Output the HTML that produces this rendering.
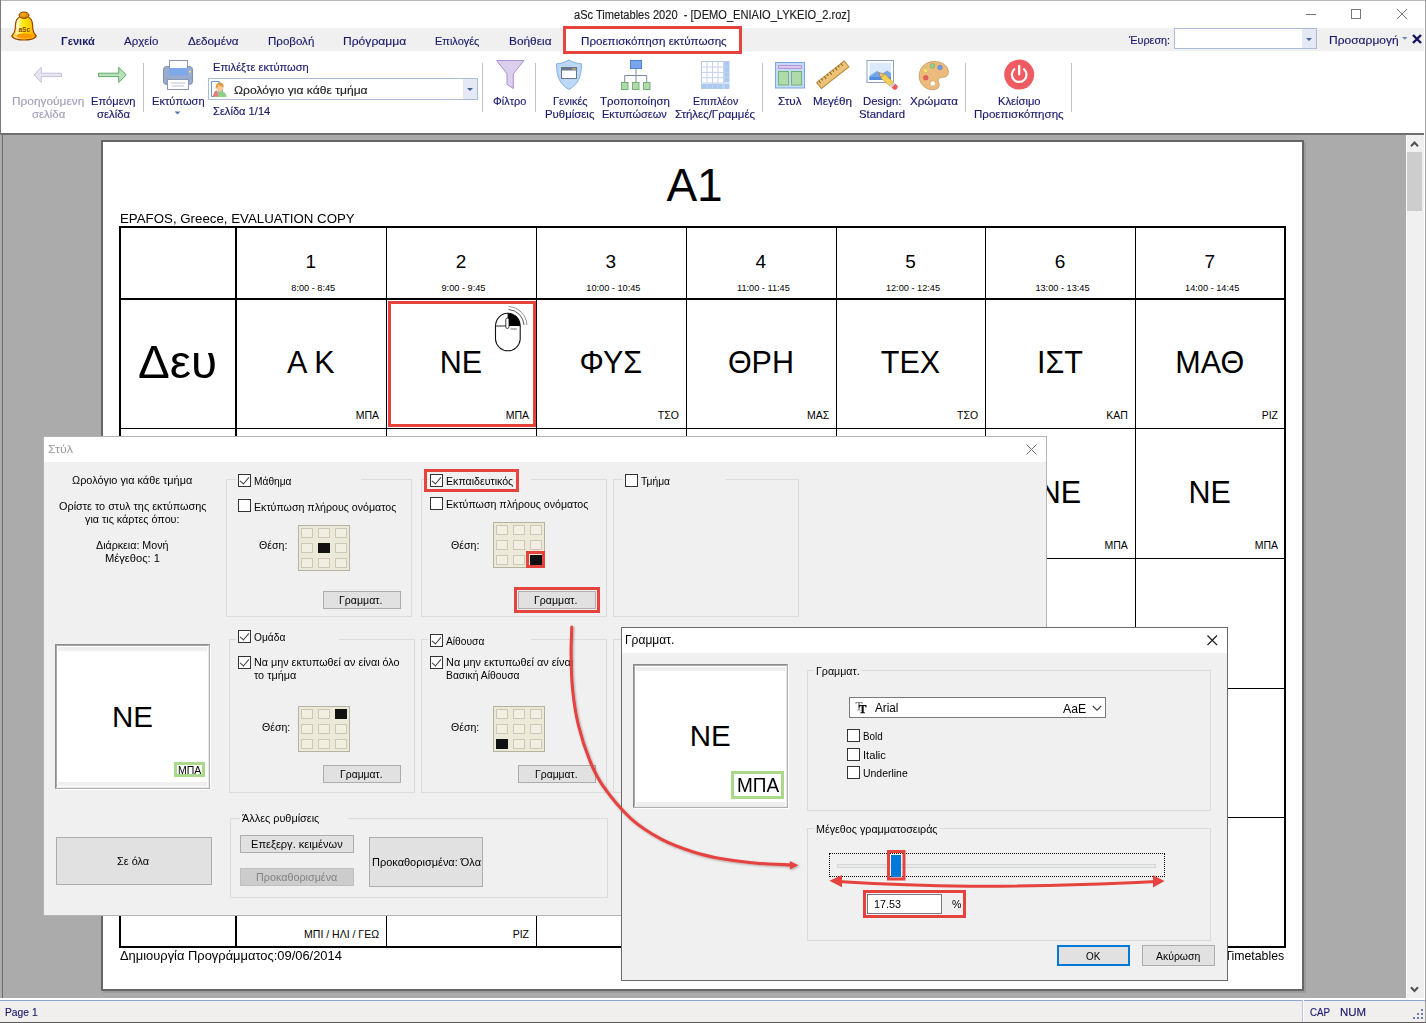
<!DOCTYPE html>
<html lang="el">
<head>
<meta charset="utf-8">
<title>aSc Timetables 2020</title>
<style>
*{box-sizing:border-box;margin:0;padding:0}
html,body{width:1426px;height:1023px;overflow:hidden;background:#ababab;font-family:"Liberation Sans",sans-serif;}
.abs{position:absolute}
.t{position:absolute;white-space:pre;transform-origin:0 0}
#app{position:absolute;left:0;top:0;width:1426px;height:1023px;overflow:hidden;background:#ababab}
/* ---------- title + ribbon ---------- */
#titlebar{position:absolute;left:0;top:0;width:1426px;height:28px;background:#fff}
#title{position:absolute;left:0;width:1426px;top:7px;text-align:center;font-size:12px;color:#1e1e1e;letter-spacing:-0.1px}
#tabrow{position:absolute;left:0;top:28px;width:1426px;height:23px;background:#f0f0f0}
.tab{position:absolute;top:6px;font-size:12px;color:#1a1a6c;white-space:nowrap;transform-origin:0 0}
#ribbon{position:absolute;left:0;top:51px;width:1426px;height:82px;background:#fff}
#ribline{position:absolute;left:0;top:133px;width:1426px;height:2px;background:#6e6e6e}
.rlab{position:absolute;font-size:12px;line-height:13px;color:#1a1a6c;text-align:center;white-space:nowrap;transform:translateX(-50%)}
.rlab.dis{color:#9c9cb0}
.rsep{position:absolute;top:63px;width:1px;height:49px;background:#c4c4c4}
/* ---------- page ---------- */
#page{position:absolute;left:101px;top:140px;width:1203px;height:851px;background:#fff;border:2px solid #666;box-shadow:2px 2px 0 #9c9c9c}
.tt{position:absolute;color:#000;white-space:nowrap}
.hl{position:absolute;background:#000;height:1px}
.vl{position:absolute;background:#000;width:1px}
.num{position:absolute;font-size:20px;color:#000;transform:translateX(-50%);white-space:nowrap}
.tm{position:absolute;font-size:9px;color:#000;transform:translateX(-50%);white-space:nowrap}
.sub{position:absolute;font-size:29px;color:#000;transform:translateX(-50%);white-space:nowrap}
.tch{position:absolute;font-size:10.5px;color:#000;white-space:nowrap;text-align:right}
/* ---------- status ---------- */
#status{position:absolute;left:0;top:999px;width:1426px;height:23px;background:#f1eeee;border-top:1px solid #fff}
#status span{position:absolute;top:5px;font-size:12px;color:#1a1a6c}
/* ---------- dialogs ---------- */
.dlg{position:absolute;background:#f0f0f0;border:1px solid #9a9a9a}
.dlg .cap{position:absolute;left:0;top:0;right:0;height:25px;background:#fff}
.dt{position:absolute;font-size:11px;color:#000;white-space:nowrap}
.grp{position:absolute;border:1px solid #dcdcdc}
.cb{position:absolute;width:13px;height:13px;background:#fff;border:1px solid #333}
.cb.on::after{content:"";position:absolute;left:3px;top:0px;width:4px;height:8px;border:solid #3c3c3c;border-width:0 1.2px 1.2px 0;transform:rotate(40deg)}
.btn{position:absolute;background:#e1e1e1;border:1px solid #adadad;font-size:11px;color:#000;text-align:center;white-space:nowrap}
.pos{position:absolute;width:52px;height:46px;background:#ece9d8;border:1px solid #b5b2a0}
.pos i{position:absolute;width:12px;height:10px;border:1px solid #cbc8b8;background:#f2efe2}
.pos i.s{background:#111;border-color:#111}
</style>
</head>
<body>
<div id="app">
<div id="titlebar">
  <div class="abs" style="left:0;top:0;width:1426px;height:1px;background:#b9b9b9"></div>
  
  <svg class="abs" style="left:1296px;top:0" width="130" height="28" viewBox="0 0 130 28">
    <path d="M10 14.5H20" stroke="#777" stroke-width="1" fill="none"/>
    <rect x="55.5" y="9.5" width="9" height="9" stroke="#777" stroke-width="1" fill="none"/>
    <path d="M101 9L111 19M111 9L101 19" stroke="#777" stroke-width="1" fill="none"/>
  </svg>
</div>
<div id="tabrow">








  <div class="abs" style="left:1174px;top:0;width:143px;height:21px;background:#fff;border:1px solid #abbcd6">
    <div class="abs" style="right:0;top:0;width:14px;height:19px;background:#e4e9f5"></div>
    <svg class="abs" style="right:4px;top:9px" width="6" height="4"><path d="M0 0H6L3 3Z" fill="#41649b"/></svg>
  </div>
  <svg class="abs" style="left:1401.500px;top:9px" width="6" height="4"><path d="M0 0H5.500L2.750 2.750Z" fill="#6a85b8"/></svg>
  <svg class="abs" style="left:1411.500px;top:6px" width="10" height="10"><path d="M1 1L9 9M9 1L1 9" stroke="#15155c" stroke-width="2.4"/></svg>
</div>
<!-- bell -->
<svg class="abs" style="left:8px;top:8px" width="34" height="36" viewBox="8 8 34 36">
  <defs>
    <linearGradient id="bb" x1="0" y1="0" x2="1" y2="0"><stop offset="0" stop-color="#f2a600"/><stop offset=".22" stop-color="#fff3a0"/><stop offset=".5" stop-color="#ffe800"/><stop offset=".8" stop-color="#ffc400"/><stop offset="1" stop-color="#e88a00"/></linearGradient>
    <linearGradient id="br" x1="0" y1="0" x2="0" y2="1"><stop offset="0" stop-color="#ffd000"/><stop offset="1" stop-color="#ff9500"/></linearGradient>
    <radialGradient id="bk" cx="40%" cy="35%" r="70%"><stop offset="0" stop-color="#f7b21a"/><stop offset="1" stop-color="#c97400"/></radialGradient>
  </defs>
  <path d="M11.900 35.600C13.600 33.600 15.100 32 15.200 29C15.200 22 16 16.500 24 16C32 16.500 32.800 22 32.800 29C32.900 32 34.400 33.600 36.100 35.600C36.600 38.300 30 40 24 40C18 40 11.400 38.300 11.900 35.600Z" fill="url(#bb)" stroke="#9a4300" stroke-width="1.200" stroke-linejoin="round"/>
  <ellipse cx="24.500" cy="36" rx="8" ry="2.700" fill="#ff9800"/>
  <path d="M17 30C17 24 17.500 20 20.500 18.500C18.800 21 18.600 25 18.700 30.500Z" fill="#fff" opacity=".7"/>
  <ellipse cx="24" cy="15.200" rx="5" ry="3.200" fill="url(#bk)" stroke="#8a4300" stroke-width="1"/>
  <text x="24.300" y="32.200" font-size="6.500" font-weight="bold" text-anchor="middle" fill="#8a4708" font-family="Liberation Sans, sans-serif">aSc</text>
</svg>
<div id="ribbon"></div>
<div id="ribline"></div>
<div class="abs" style="left:0;top:0;width:1px;height:135px;background:#7a7a7a"></div>
<div class="abs" style="left:2px;top:135px;width:1px;height:863px;background:#6e6e6e"></div>
<!-- ribbon separators -->
<div class="rsep" style="left:143px"></div>
<div class="rsep" style="left:482px"></div>
<div class="rsep" style="left:535px"></div>
<div class="rsep" style="left:762px"></div>
<div class="rsep" style="left:965px"></div>
<div class="rsep" style="left:1071px"></div>
<!-- combo -->
<div class="abs" style="left:208px;top:78px;width:270px;height:22px;border:1px solid #abbcd6;background:#fff">
  <div class="abs" style="right:0;top:0;width:14px;height:20px;background:#e4e9f5"></div>
  <svg class="abs" style="right:4px;top:9px" width="6" height="4"><path d="M0 0H6L3 3Z" fill="#41649b"/></svg>
</div>
<!-- ribbon icons: one svg overlay covering ribbon y=51..133 -->
<svg class="abs" style="left:0;top:51px" width="1100" height="82" viewBox="0 51 1100 82">
  <!-- prev arrow -->
  <path d="M34 74.800L41.300 67.300V73.200H61.500V76.600H41.300V82.500Z" fill="#e6e4f0" stroke="#c6c2da" stroke-width="1" stroke-linejoin="miter"/>
  <!-- next arrow -->
  <path d="M126.300 74.800L118.700 67.300V73.200H98.500V76.600H118.700V82.500Z" fill="#b9e0b7" stroke="#5fa96a" stroke-width="1"/>
  <!-- printer -->
  <rect x="163.5" y="66.5" width="29" height="18" rx="3" fill="#9aaccc" stroke="#7f90b3"/>
  <rect x="169.5" y="60.5" width="18" height="8" fill="#fff" stroke="#8a98b8"/>
  <rect x="169" y="68" width="19" height="7.5" fill="#7ea8ea"/>
  <circle cx="189.8" cy="71.7" r="1" fill="#ffe27a"/>
  <rect x="167.5" y="79.5" width="21" height="10" fill="#fff" stroke="#8a98b8"/>
  <path d="M171 83H185M172 86H184" stroke="#b6bfd2" stroke-width="1"/>
  <!-- Εκτύπωση dropdown -->
  <path d="M174.5 111.5H180.5L177.5 114.5Z" fill="#5a78b0"/>
  <!-- combo icon (doc + person) -->
  <path d="M211.5 81.5H219L222.5 85V96.5H211.5Z" fill="#fff" stroke="#6b96d8" stroke-width="1"/>
  <path d="M219 81.5V85H222.5" fill="none" stroke="#6b96d8"/>
  <path d="M214 97C214 92.5 217 91 219.5 91C223 91 226.5 92.5 226.5 97Z" fill="#8ed08a"/>
  <path d="M213 96.5C213.5 92 215.5 90.5 217 90.5L218 96.5Z" fill="#f0767c"/>
  <ellipse cx="220" cy="87.5" rx="3.4" ry="4" fill="#f7c99a"/>
  <path d="M215.8 89C215.2 84.5 217.5 82.6 220.3 82.8C222.6 83 224 84.7 223.6 87.2C222.3 86.8 220 86 218.3 84.8C217.8 86.5 217 88.4 215.8 89Z" fill="#e39a3c"/>
  <!-- filter -->
  <path d="M496.6 60.5H524L513.3 73.8V88.5L507 84.3V73.8Z" fill="#dccfee" stroke="#a98fd0" stroke-width="1" stroke-linejoin="round"/>
  <!-- shield -->
  <path d="M569 60C564.5 62.6 560.3 63.6 556.6 63.8C556.4 76 559.5 84.2 569 89.4C578.5 84.2 581.6 76 581.4 63.8C577.7 63.6 573.5 62.6 569 60Z" fill="#bcd8f7" stroke="#7fb0e6" stroke-width="1"/>
  <rect x="561.5" y="67.5" width="15" height="11" fill="#fff" stroke="#6d7689"/>
  <rect x="561.5" y="67.5" width="15" height="3" fill="#6d7689"/>
  <rect x="572.5" y="68.3" width="1.3" height="1.3" fill="#f5c65a"/><rect x="574.4" y="68.3" width="1.3" height="1.3" fill="#f5c65a"/>
  <!-- org chart -->
  <rect x="630.5" y="60.5" width="11" height="8" fill="#78a5ee" stroke="#4f82d8"/>
  <path d="M636 69V82M624.7 82V75.5H646.7V82" fill="none" stroke="#7d8aa3" stroke-width="1"/>
  <rect x="621.5" y="82.500" width="6.5" height="7" fill="#aedba9" stroke="#73b174"/>
  <rect x="632.5" y="82.500" width="6.5" height="7" fill="#aedba9" stroke="#73b174"/>
  <rect x="643.5" y="82.500" width="6.5" height="7" fill="#aedba9" stroke="#73b174"/>
  <!-- grid -->
  <rect x="701.5" y="61.5" width="27.500" height="27" fill="#fff" stroke="#b8c6e2"/>
  <rect x="723.5" y="61.5" width="5.5" height="27" fill="#a9c9f2"/>
  <rect x="701.5" y="83" width="27.500" height="5.5" fill="#a9c9f2"/>
  <path d="M723.500 61.500V88.500M701.500 83H729" stroke="#fff" stroke-width="1.400" fill="none"/>
  <path d="M707 61.5V88.500M712.500 61.5V88.500M718 61.5V88.500M723.500 61.5V88.500M701.500 67H729M701.500 72.400H729M701.500 77.700H729M701.500 83H729" stroke="#c5d2ea" stroke-width="1" fill="none"/>
  <!-- style icon -->
  <rect x="775.5" y="62.5" width="29" height="25.500" fill="#c4dbf7" stroke="#7ea6e2"/>
  <rect x="778.5" y="65.500" width="23" height="3" fill="#dcc6ee" stroke="#b497d4"/>
  <rect x="778.5" y="71.500" width="10" height="13.500" fill="#aedba9" stroke="#73b174"/>
  <rect x="791.5" y="71.500" width="10" height="13.500" fill="#aedba9" stroke="#73b174"/>
  <!-- ruler -->
  <g transform="rotate(-38 832.800 74.700)">
    <rect x="815.300" y="70.900" width="35" height="7.600" fill="#edc477" stroke="#b98a3c"/>
    <path d="M818 70.800V74M821.500 70.800V73M825 70.800V74M828.500 70.800V73M832 70.800V74M835.500 70.800V73M839 70.800V74M842.500 70.800V73M846 70.800V74" stroke="#8a6225" stroke-width="1"/>
  </g>
  <!-- design icon -->
  <rect x="867" y="60.500" width="26.500" height="22" fill="#fff" stroke="#8fa0bd"/>
  <rect x="869.500" y="63" width="21.500" height="17" fill="#dce9fb"/>
  <path d="M869.500 76L877 71L882 74L887 70.500L891 73V80H869.500Z" fill="#74a7ea"/>
  <rect x="869.500" y="77" width="21.500" height="3" fill="#4f8be0"/>
  <g transform="rotate(42 886 79)">
    <path d="M876.500 79L881.500 76.300V81.700Z" fill="#e9c48f" stroke="#a8793a" stroke-width=".6"/>
    <rect x="881.500" y="76.300" width="12" height="5.400" fill="#f7ce55" stroke="#c19a2c" stroke-width=".6"/>
    <rect x="893.500" y="76.300" width="2.500" height="5.400" fill="#c9cdd6"/>
    <path d="M896 76.300H898A2.700 2.700 0 0 1 898 81.700H896Z" fill="#ef5a60"/>
  </g>
  <!-- palette -->
  <path d="M934.500 61.500C925 61.300 918.500 68.500 919.200 77C919.800 85 926.500 90.300 934 89.700C938.500 89.300 940.200 86 938.700 82.800C937.300 79.800 939 77.300 942.300 77.300C946.500 77.300 948.800 75 948.300 71C947.500 65 941 61.600 934.500 61.500Z" fill="#ebbb7d" stroke="#c79650" stroke-width=".8"/>
  <circle cx="925.500" cy="70.500" r="2.300" fill="#f7e27a" stroke="#c9b24a" stroke-width=".5"/>
  <circle cx="932.500" cy="65.800" r="2.300" fill="#8fd08c" stroke="#5ca55e" stroke-width=".5"/>
  <circle cx="940" cy="67.500" r="2.300" fill="#6f9be8" stroke="#4a78c8" stroke-width=".5"/>
  <circle cx="925.800" cy="77.800" r="2.300" fill="#ef5a60" stroke="#c43c44" stroke-width=".5"/>
  <circle cx="932.800" cy="83.500" r="2.600" fill="#fff" stroke="#c79650" stroke-width=".5"/>
  <!-- power -->
  <circle cx="1019.200" cy="74.600" r="15" fill="#ef5b62"/>
  <path d="M1014.300 69.200A7.300 7.300 0 1 0 1024.100 69.200" fill="none" stroke="#fff" stroke-width="2.200" stroke-linecap="round"/>
  <path d="M1019.200 65.800V74.500" stroke="#fff" stroke-width="2.200" stroke-linecap="round"/>
</svg>
<!-- active tab -->
<div class="abs" style="left:563px;top:26px;width:179px;height:28px;background:#fff;border:3px solid #e6433f"></div>

<span class="t" style="left:574.0px;top:9.3px;font-size:12px;line-height:12px;color:#1c1c1c;transform:scaleX(0.9244);-webkit-text-stroke:0.15px #1c1c1c">aSc Timetables 2020  - [DEMO_ENIAIO_LYKEIO_2.roz]</span>
<span class="t" style="left:60.6px;top:36.3px;font-size:11px;line-height:11px;color:#1a1a6c;transform:scaleX(1.0075);font-weight:bold">Γενικά</span>
<span class="t" style="left:123.7px;top:36.3px;font-size:11px;line-height:11px;color:#1a1a6c;transform:scaleX(1.0443);-webkit-text-stroke:0.15px #1a1a6c">Αρχείο</span>
<span class="t" style="left:187.9px;top:36.3px;font-size:11px;line-height:11px;color:#1a1a6c;transform:scaleX(1.0611);-webkit-text-stroke:0.15px #1a1a6c">Δεδομένα</span>
<span class="t" style="left:267.7px;top:36.3px;font-size:11px;line-height:11px;color:#1a1a6c;transform:scaleX(1.0482);-webkit-text-stroke:0.15px #1a1a6c">Προβολή</span>
<span class="t" style="left:343.4px;top:36.3px;font-size:11px;line-height:11px;color:#1a1a6c;transform:scaleX(1.0994);-webkit-text-stroke:0.15px #1a1a6c">Πρόγραμμα</span>
<span class="t" style="left:435.4px;top:36.3px;font-size:11px;line-height:11px;color:#1a1a6c;transform:scaleX(0.9971);-webkit-text-stroke:0.15px #1a1a6c">Επιλογές</span>
<span class="t" style="left:509.0px;top:36.3px;font-size:11px;line-height:11px;color:#1a1a6c;transform:scaleX(1.0785);-webkit-text-stroke:0.15px #1a1a6c">Βοήθεια</span>
<span class="t" style="left:580.6px;top:36.3px;font-size:11px;line-height:11px;color:#1a1a6c;transform:scaleX(1.0554);-webkit-text-stroke:0.15px #1a1a6c">Προεπισκόπηση εκτύπωσης</span>
<span class="t" style="left:1129.3px;top:34.8px;font-size:11px;line-height:11px;color:#1a1a6c;transform:scaleX(0.9841);-webkit-text-stroke:0.15px #1a1a6c">Έυρεση:</span>
<span class="t" style="left:1329.3px;top:34.8px;font-size:11px;line-height:11px;color:#1a1a6c;transform:scaleX(1.0923);-webkit-text-stroke:0.15px #1a1a6c">Προσαρμογή</span>
<span class="t" style="left:11.9px;top:96.4px;font-size:11px;line-height:11px;color:#a3a0b8;transform:scaleX(1.0801);-webkit-text-stroke:0.15px #a3a0b8">Προηγούμενη</span>
<span class="t" style="left:31.6px;top:108.9px;font-size:11px;line-height:11px;color:#a3a0b8;transform:scaleX(1.0366);-webkit-text-stroke:0.15px #a3a0b8">σελίδα</span>
<span class="t" style="left:90.6px;top:96.4px;font-size:11px;line-height:11px;color:#1a1a6c;transform:scaleX(1.0112);-webkit-text-stroke:0.15px #1a1a6c">Επόμενη</span>
<span class="t" style="left:97.0px;top:108.9px;font-size:11px;line-height:11px;color:#1a1a6c;transform:scaleX(1.0272);-webkit-text-stroke:0.15px #1a1a6c">σελίδα</span>
<span class="t" style="left:151.6px;top:96.4px;font-size:11px;line-height:11px;color:#1a1a6c;transform:scaleX(1.0088);-webkit-text-stroke:0.15px #1a1a6c">Εκτύπωση</span>
<span class="t" style="left:212.6px;top:62.0px;font-size:11px;line-height:11px;color:#1a1a6c;transform:scaleX(1.0116);-webkit-text-stroke:0.15px #1a1a6c">Επιλέξτε εκτύπωση</span>
<span class="t" style="left:233.7px;top:84.7px;font-size:11px;line-height:11px;color:#1e1e1e;transform:scaleX(1.0985);-webkit-text-stroke:0.15px #1e1e1e">Ωρολόγιο για κάθε τμήμα</span>
<span class="t" style="left:212.6px;top:106.2px;font-size:11px;line-height:11px;color:#1a1a6c;transform:scaleX(1.0122);-webkit-text-stroke:0.15px #1a1a6c">Σελίδα 1/14</span>
<span class="t" style="left:493.0px;top:96.4px;font-size:11px;line-height:11px;color:#1a1a6c;transform:scaleX(0.9954);-webkit-text-stroke:0.15px #1a1a6c">Φίλτρο</span>
<span class="t" style="left:552.6px;top:96.4px;font-size:11px;line-height:11px;color:#1a1a6c;transform:scaleX(1.0022);-webkit-text-stroke:0.15px #1a1a6c">Γενικές</span>
<span class="t" style="left:544.8px;top:108.9px;font-size:11px;line-height:11px;color:#1a1a6c;transform:scaleX(1.0356);-webkit-text-stroke:0.15px #1a1a6c">Ρυθμίσεις</span>
<span class="t" style="left:599.5px;top:96.4px;font-size:11px;line-height:11px;color:#1a1a6c;transform:scaleX(1.0377);-webkit-text-stroke:0.15px #1a1a6c">Τροποποίηση</span>
<span class="t" style="left:602.0px;top:108.9px;font-size:11px;line-height:11px;color:#1a1a6c;transform:scaleX(0.9967);-webkit-text-stroke:0.15px #1a1a6c">Εκτυπώσεων</span>
<span class="t" style="left:692.5px;top:96.4px;font-size:11px;line-height:11px;color:#1a1a6c;transform:scaleX(0.9620);-webkit-text-stroke:0.15px #1a1a6c">Επιπλέον</span>
<span class="t" style="left:674.6px;top:108.9px;font-size:11px;line-height:11px;color:#1a1a6c;transform:scaleX(1.0381);-webkit-text-stroke:0.15px #1a1a6c">Στήλες/Γραμμές</span>
<span class="t" style="left:778.0px;top:96.4px;font-size:11px;line-height:11px;color:#1a1a6c;transform:scaleX(1.0614);-webkit-text-stroke:0.15px #1a1a6c">Στυλ</span>
<span class="t" style="left:813.4px;top:96.4px;font-size:11px;line-height:11px;color:#1a1a6c;transform:scaleX(1.0649);-webkit-text-stroke:0.15px #1a1a6c">Μεγέθη</span>
<span class="t" style="left:862.6px;top:96.4px;font-size:11px;line-height:11px;color:#1a1a6c;transform:scaleX(1.0296);-webkit-text-stroke:0.15px #1a1a6c">Design:</span>
<span class="t" style="left:858.7px;top:108.9px;font-size:11px;line-height:11px;color:#1a1a6c;transform:scaleX(1.0301);-webkit-text-stroke:0.15px #1a1a6c">Standard</span>
<span class="t" style="left:910.0px;top:96.4px;font-size:11px;line-height:11px;color:#1a1a6c;transform:scaleX(1.0564);-webkit-text-stroke:0.15px #1a1a6c">Χρώματα</span>
<span class="t" style="left:997.9px;top:96.4px;font-size:11px;line-height:11px;color:#1a1a6c;transform:scaleX(1.0173);-webkit-text-stroke:0.15px #1a1a6c">Κλείσιμο</span>
<span class="t" style="left:974.3px;top:108.9px;font-size:11px;line-height:11px;color:#1a1a6c;transform:scaleX(1.0516);-webkit-text-stroke:0.15px #1a1a6c">Προεπισκόπησης</span>
<div id="page"></div>
<!-- table lines -->
<div class="abs" style="left:119px;top:226px;width:1167px;height:2px;background:#000"></div>
<div class="abs" style="left:119px;top:298px;width:1167px;height:2px;background:#000"></div>
<div class="abs" style="left:119px;top:946px;width:1167px;height:2px;background:#000"></div>
<div class="abs" style="left:119px;top:226px;width:2px;height:722px;background:#000"></div>
<div class="abs" style="left:235px;top:226px;width:2px;height:722px;background:#000"></div>
<div class="abs" style="left:1284px;top:226px;width:2px;height:722px;background:#000"></div>
<div class="vl" style="left:386px;top:226px;height:722px"></div>
<div class="vl" style="left:536px;top:226px;height:722px"></div>
<div class="vl" style="left:686px;top:226px;height:722px"></div>
<div class="vl" style="left:836px;top:226px;height:722px"></div>
<div class="vl" style="left:985px;top:226px;height:722px"></div>
<div class="vl" style="left:1135px;top:226px;height:722px"></div>
<div class="hl" style="left:119px;top:428px;width:1167px"></div>
<div class="hl" style="left:119px;top:558px;width:1167px"></div>
<div class="hl" style="left:119px;top:688px;width:1167px"></div>
<div class="hl" style="left:119px;top:817px;width:1167px"></div>
<!-- red highlight cell -->
<div class="abs" style="left:388px;top:301px;width:148px;height:126px;border:3px solid #e6433f"></div>
<!-- mouse icon -->
<svg class="abs" style="left:490px;top:303px" width="40" height="52" viewBox="490 303 40 52">
  <path d="M507.600 313.200A12.400 13 0 0 0 495.500 326V339.500A12.400 12.400 0 0 0 520.200 339.500V326A12.400 13 0 0 0 507.600 313.200Z" fill="#fff" stroke="#111" stroke-width="1.100"/>
  <path d="M507.600 313.200A12.400 13 0 0 1 520.200 326H507.600Z" fill="#000"/>
  <path d="M495.500 326H507" stroke="#111" stroke-width=".9"/>
  <rect x="505.800" y="318" width="3.200" height="10.500" rx="1.600" fill="#fff" stroke="#111" stroke-width=".8"/>
  <path d="M510.500 329H517" stroke="#777" stroke-width="1"/>
  <path d="M508.500 309.500A16.500 16.500 0 0 1 524 325" fill="none" stroke="#444" stroke-width=".9"/>
  <path d="M508.500 306.500A19.500 19.500 0 0 1 527 325" fill="none" stroke="#777" stroke-width=".8"/>
</svg>

<span class="t" style="left:666.4px;top:162.2px;font-size:46px;line-height:46px;color:#000">A1</span>
<span class="t" style="left:119.8px;top:211.9px;font-size:13.5px;line-height:13.5px;color:#000;transform:scaleX(0.9837)">EPAFOS, Greece, EVALUATION COPY</span>
<span class="t" style="left:305.5px;top:252.1px;font-size:19px;line-height:19px;color:#000">1</span>
<span class="t" style="left:291.3px;top:284.2px;font-size:9.2px;line-height:9.2px;color:#000">8:00 - 8:45</span>
<span class="t" style="left:455.7px;top:252.1px;font-size:19px;line-height:19px;color:#000">2</span>
<span class="t" style="left:441.5px;top:284.2px;font-size:9.2px;line-height:9.2px;color:#000">9:00 - 9:45</span>
<span class="t" style="left:605.6px;top:252.1px;font-size:19px;line-height:19px;color:#000">3</span>
<span class="t" style="left:586.3px;top:284.2px;font-size:9.2px;line-height:9.2px;color:#000">10:00 - 10:45</span>
<span class="t" style="left:755.6px;top:252.1px;font-size:19px;line-height:19px;color:#000">4</span>
<span class="t" style="left:737.0px;top:284.2px;font-size:9.2px;line-height:9.2px;color:#000">11:00 - 11:45</span>
<span class="t" style="left:905.2px;top:252.1px;font-size:19px;line-height:19px;color:#000">5</span>
<span class="t" style="left:885.9px;top:284.2px;font-size:9.2px;line-height:9.2px;color:#000">12:00 - 12:45</span>
<span class="t" style="left:1054.7px;top:252.1px;font-size:19px;line-height:19px;color:#000">6</span>
<span class="t" style="left:1035.4px;top:284.2px;font-size:9.2px;line-height:9.2px;color:#000">13:00 - 13:45</span>
<span class="t" style="left:1204.4px;top:252.1px;font-size:19px;line-height:19px;color:#000">7</span>
<span class="t" style="left:1185.1px;top:284.2px;font-size:9.2px;line-height:9.2px;color:#000">14:00 - 14:45</span>
<span class="t" style="left:138.3px;top:339.4px;font-size:46px;line-height:46px;color:#000;transform:scaleX(1.0342)">Δευ</span>
<span class="t" style="left:287.1px;top:347.2px;font-size:30.5px;line-height:30.5px;color:#000">Α Κ</span>
<span class="t" style="left:439.8px;top:347.2px;font-size:30.5px;line-height:30.5px;color:#000">ΝΕ</span>
<span class="t" style="left:579.6px;top:347.2px;font-size:30.5px;line-height:30.5px;color:#000">ΦΥΣ</span>
<span class="t" style="left:727.9px;top:347.2px;font-size:30.5px;line-height:30.5px;color:#000">ΘΡΗ</span>
<span class="t" style="left:880.8px;top:347.2px;font-size:30.5px;line-height:30.5px;color:#000">ΤΕΧ</span>
<span class="t" style="left:1037.0px;top:347.2px;font-size:30.5px;line-height:30.5px;color:#000">ΙΣΤ</span>
<span class="t" style="left:1175.3px;top:347.2px;font-size:30.5px;line-height:30.5px;color:#000">ΜΑΘ</span>
<span class="t" style="left:355.7px;top:410.4px;font-size:10.5px;line-height:10.5px;color:#000">ΜΠΑ</span>
<span class="t" style="left:505.7px;top:410.4px;font-size:10.5px;line-height:10.5px;color:#000">ΜΠΑ</span>
<span class="t" style="left:657.8px;top:410.4px;font-size:10.5px;line-height:10.5px;color:#000">ΤΣΟ</span>
<span class="t" style="left:806.9px;top:410.4px;font-size:10.5px;line-height:10.5px;color:#000">ΜΑΣ</span>
<span class="t" style="left:957.0px;top:410.4px;font-size:10.5px;line-height:10.5px;color:#000">ΤΣΟ</span>
<span class="t" style="left:1106.2px;top:410.4px;font-size:10.5px;line-height:10.5px;color:#000">ΚΑΠ</span>
<span class="t" style="left:1261.7px;top:410.4px;font-size:10.5px;line-height:10.5px;color:#000">ΡΙΖ</span>
<span class="t" style="left:1038.8px;top:477.2px;font-size:30.5px;line-height:30.5px;color:#000">ΝΕ</span>
<span class="t" style="left:1188.5px;top:477.2px;font-size:30.5px;line-height:30.5px;color:#000">ΝΕ</span>
<span class="t" style="left:1104.5px;top:540.4px;font-size:10.5px;line-height:10.5px;color:#000">ΜΠΑ</span>
<span class="t" style="left:1254.7px;top:540.4px;font-size:10.5px;line-height:10.5px;color:#000">ΜΠΑ</span>
<span class="t" style="left:304.1px;top:928.9px;font-size:10.5px;line-height:10.5px;color:#000">ΜΠΙ / ΗΛΙ / ΓΕΩ</span>
<span class="t" style="left:512.7px;top:928.9px;font-size:10.5px;line-height:10.5px;color:#000">ΡΙΖ</span>
<span class="t" style="left:119.5px;top:949.3px;font-size:13.5px;line-height:13.5px;color:#000;transform:scaleX(0.9557)">Δημιουργία Προγράμματος:09/06/2014</span>
<span class="t" style="left:1200.3px;top:949.3px;font-size:13.5px;line-height:13.5px;color:#000;transform:scaleX(0.9123)">aSc Timetables</span>
<!-- scrollbar -->
<div class="abs" style="left:1406px;top:135px;width:18px;height:863px;background:#f0f0f0"></div>
<div class="abs" style="left:1406px;top:135px;width:1px;height:863px;background:#fbfbfb"></div>
<div class="abs" style="left:1407px;top:152px;width:15px;height:59px;background:#cdcdcd"></div>
<svg class="abs" style="left:1406px;top:135px" width="18" height="17"><path d="M5 11.200L8.500 7.500L12 11.200" fill="none" stroke="#505050" stroke-width="2"/></svg>
<svg class="abs" style="left:1406px;top:981px" width="18" height="17"><path d="M5 6.300L8.500 10L12 6.300" fill="none" stroke="#505050" stroke-width="2"/></svg>
<div class="abs" style="left:1424px;top:28px;width:1px;height:995px;background:#fff"></div>
<div class="abs" style="left:1425px;top:0;width:1px;height:1023px;background:#a2a2a2"></div>
<!-- status bar -->
<div class="abs" style="left:0;top:998px;width:1425px;height:2px;background:#fff"></div>
<div class="abs" style="left:0;top:1000px;width:1425px;height:1px;background:#8ea5cf"></div>
<div class="abs" style="left:0;top:1001px;width:1425px;height:21px;background:#f1eeee"></div>
<div class="abs" style="left:0;top:1022px;width:1426px;height:1px;background:#5a5a5a"></div>
<div class="abs" style="left:1302px;top:1000px;width:1px;height:22px;background:#b9c3da"></div>
<div class="abs" style="left:1303px;top:1000px;width:1px;height:22px;background:#fff"></div>
<svg class="abs" style="left:1412px;top:1008px" width="12" height="12"><g fill="#6b7fae"><rect x="9" y="1" width="2" height="2"/><rect x="5" y="5" width="2" height="2"/><rect x="9" y="5" width="2" height="2"/><rect x="1" y="9" width="2" height="2"/><rect x="5" y="9" width="2" height="2"/><rect x="9" y="9" width="2" height="2"/></g></svg>

<span class="t" style="left:4.6px;top:1007.4px;font-size:10.5px;line-height:10.5px;color:#1a1a6c;transform:scaleX(0.9795);-webkit-text-stroke:0.15px #1a1a6c">Page 1</span>
<span class="t" style="left:1310.0px;top:1007.4px;font-size:10.5px;line-height:10.5px;color:#1a1a6c;transform:scaleX(0.9262);-webkit-text-stroke:0.15px #1a1a6c">CAP</span>
<span class="t" style="left:1340.0px;top:1007.4px;font-size:10.5px;line-height:10.5px;color:#1a1a6c;transform:scaleX(1.0869);-webkit-text-stroke:0.15px #1a1a6c">NUM</span>
<div class="dlg" style="left:43px;top:436px;width:1004px;height:480px;border-color:#b4b4b4">
  <div class="cap"></div>
</div>
<svg class="abs" style="left:1026px;top:444px" width="11" height="11"><path d="M.5 .5L10.500 10.500M10.500 .5L.5 10.500" stroke="#6f6f6f" stroke-width="1" fill="none"/></svg>
<!-- groups -->
<div class="grp" style="left:226px;top:479px;width:186px;height:138px"></div>
<div class="abs" style="left:236px;top:479px;width:125px;height:1px;background:#f0f0f0"></div>
<div class="grp" style="left:421px;top:479px;width:186px;height:138px"></div>
<div class="abs" style="left:428px;top:479px;width:103px;height:1px;background:#f0f0f0"></div>
<div class="grp" style="left:613px;top:479px;width:186px;height:138px"></div>
<div class="abs" style="left:623px;top:479px;width:103px;height:1px;background:#f0f0f0"></div>
<div class="grp" style="left:229px;top:639px;width:186px;height:154px"></div>
<div class="abs" style="left:236px;top:639px;width:103px;height:1px;background:#f0f0f0"></div>
<div class="grp" style="left:421px;top:639px;width:186px;height:154px"></div>
<div class="abs" style="left:428px;top:639px;width:103px;height:1px;background:#f0f0f0"></div>
<div class="grp" style="left:613px;top:639px;width:186px;height:154px"></div>
<div class="grp" style="left:230px;top:818px;width:378px;height:80px"></div>
<div class="abs" style="left:240px;top:818px;width:108px;height:1px;background:#f0f0f0"></div>
<!-- checkboxes -->
<div class="cb on" style="left:238px;top:474px"></div>
<div class="cb" style="left:238px;top:499px"></div>
<div class="cb on" style="left:430px;top:474px"></div>
<div class="cb" style="left:430px;top:497px"></div>
<div class="cb" style="left:625px;top:474px"></div>
<div class="cb on" style="left:238px;top:630px"></div>
<div class="cb on" style="left:238px;top:656px"></div>
<div class="cb on" style="left:430px;top:634px"></div>
<div class="cb on" style="left:430px;top:656px"></div>
<!-- position grids -->
<div class="pos" style="left:298px;top:525px"><i style="left:2px;top:2px"></i><i style="left:19px;top:2px"></i><i style="left:36px;top:2px"></i><i style="left:2px;top:17px"></i><i class="s" style="left:19px;top:17px"></i><i style="left:36px;top:17px"></i><i style="left:2px;top:32px"></i><i style="left:19px;top:32px"></i><i style="left:36px;top:32px"></i></div>
<div class="pos" style="left:493px;top:522px"><i style="left:2px;top:2px"></i><i style="left:19px;top:2px"></i><i style="left:36px;top:2px"></i><i style="left:2px;top:17px"></i><i style="left:19px;top:17px"></i><i style="left:36px;top:17px"></i><i style="left:2px;top:32px"></i><i style="left:19px;top:32px"></i><i class="s" style="left:36px;top:32px"></i></div>
<div class="pos" style="left:298px;top:706px"><i style="left:2px;top:2px"></i><i style="left:19px;top:2px"></i><i class="s" style="left:36px;top:2px"></i><i style="left:2px;top:17px"></i><i style="left:19px;top:17px"></i><i style="left:36px;top:17px"></i><i style="left:2px;top:32px"></i><i style="left:19px;top:32px"></i><i style="left:36px;top:32px"></i></div>
<div class="pos" style="left:493px;top:706px"><i style="left:2px;top:2px"></i><i style="left:19px;top:2px"></i><i style="left:36px;top:2px"></i><i style="left:2px;top:17px"></i><i style="left:19px;top:17px"></i><i style="left:36px;top:17px"></i><i class="s" style="left:2px;top:32px"></i><i style="left:19px;top:32px"></i><i style="left:36px;top:32px"></i></div>
<!-- buttons -->
<div class="btn" style="left:323px;top:591px;width:78px;height:18px"></div>
<div class="btn" style="left:518px;top:591px;width:78px;height:18px"></div>
<div class="btn" style="left:323px;top:765px;width:78px;height:18px"></div>
<div class="btn" style="left:518px;top:765px;width:78px;height:18px"></div>
<div class="btn" style="left:56px;top:837px;width:156px;height:48px"></div>
<div class="btn" style="left:240px;top:835px;width:114px;height:18px"></div>
<div class="btn" style="left:240px;top:868px;width:114px;height:18px;background:#cccccc;border-color:#bfbfbf"></div>
<div class="btn" style="left:369px;top:837px;width:114px;height:50px"></div>
<!-- preview box -->
<div class="abs" style="left:55px;top:644px;width:155px;height:145px;background:#fff;border:1px solid #8c8c8c;border-right-color:#b0b0b0;border-bottom-color:#b0b0b0;box-shadow:1px 1px 0 #fff"></div>
<div class="abs" style="left:56px;top:645px;width:153px;height:143px;border:1px solid #a8a8a8;border-right-color:#e8e8e8;border-bottom-color:#e8e8e8"></div>
<div class="abs" style="left:58px;top:647px;width:149px;height:4px;background:#efefef"></div>
<div class="abs" style="left:58px;top:782px;width:149px;height:4px;background:#efefef"></div>
<div class="abs" style="left:174px;top:762px;width:31px;height:15px;border:3px solid #abd98c;background:#fff"></div>

<span class="t" style="left:47.5px;top:444.3px;font-size:11.5px;line-height:11.5px;color:#9a9a9a;transform:scaleX(1.0804)">Στύλ</span>
<span class="t" style="left:71.8px;top:474.8px;font-size:11px;line-height:11px;color:#000;transform:scaleX(0.9883)">Ωρολόγιο για κάθε τμήμα</span>
<span class="t" style="left:58.5px;top:500.7px;font-size:11px;line-height:11px;color:#000;transform:scaleX(0.9883)">Ορίστε το στυλ της εκτύπωσης</span>
<span class="t" style="left:85.0px;top:513.7px;font-size:11px;line-height:11px;color:#000;transform:scaleX(0.9790)">για τις κάρτες όπου:</span>
<span class="t" style="left:95.5px;top:539.7px;font-size:11px;line-height:11px;color:#000;transform:scaleX(0.9713)">Διάρκεια: Μονή</span>
<span class="t" style="left:105.0px;top:552.7px;font-size:11px;line-height:11px;color:#000;transform:scaleX(1.0138)">Μέγεθος: 1</span>
<span class="t" style="left:253.6px;top:476.2px;font-size:11px;line-height:11px;color:#000;transform:scaleX(0.9266)">Μάθημα</span>
<span class="t" style="left:253.6px;top:501.5px;font-size:11px;line-height:11px;color:#000;transform:scaleX(0.9668)">Εκτύπωση πλήρους ονόματος</span>
<span class="t" style="left:258.6px;top:539.9px;font-size:11px;line-height:11px;color:#000;transform:scaleX(0.9648)">Θέση:</span>
<span class="t" style="left:339.2px;top:594.9px;font-size:11px;line-height:11px;color:#000;transform:scaleX(0.9618)">Γραμματ.</span>
<span class="t" style="left:445.5px;top:476.2px;font-size:11px;line-height:11px;color:#000;transform:scaleX(0.9641)">Εκπαιδευτικός</span>
<span class="t" style="left:445.5px;top:499.4px;font-size:11px;line-height:11px;color:#000;transform:scaleX(0.9668)">Εκτύπωση πλήρους ονόματος</span>
<span class="t" style="left:450.7px;top:540.3px;font-size:11px;line-height:11px;color:#000;transform:scaleX(0.9648)">Θέση:</span>
<span class="t" style="left:534.2px;top:594.6px;font-size:11px;line-height:11px;color:#000;transform:scaleX(0.9618)">Γραμματ.</span>
<span class="t" style="left:641.3px;top:476.0px;font-size:11px;line-height:11px;color:#000;transform:scaleX(0.9331)">Τμήμα</span>
<span class="t" style="left:253.8px;top:632.0px;font-size:11px;line-height:11px;color:#000;transform:scaleX(0.9274)">Ομάδα</span>
<span class="t" style="left:253.8px;top:657.3px;font-size:11px;line-height:11px;color:#000;transform:scaleX(0.9793)">Να μην εκτυπωθεί αν είναι όλο</span>
<span class="t" style="left:253.8px;top:670.2px;font-size:11px;line-height:11px;color:#000;transform:scaleX(0.9843)">το τμήμα</span>
<span class="t" style="left:261.7px;top:722.0px;font-size:11px;line-height:11px;color:#000;transform:scaleX(0.9614)">Θέση:</span>
<span class="t" style="left:339.6px;top:768.6px;font-size:11px;line-height:11px;color:#000;transform:scaleX(0.9440)">Γραμματ.</span>
<span class="t" style="left:445.8px;top:635.8px;font-size:11px;line-height:11px;color:#000;transform:scaleX(0.9299)">Αίθουσα</span>
<span class="t" style="left:445.8px;top:657.3px;font-size:11px;line-height:11px;color:#000;transform:scaleX(0.9918)">Να μην εκτυπωθεί αν είναι</span>
<span class="t" style="left:445.8px;top:670.2px;font-size:11px;line-height:11px;color:#000;transform:scaleX(0.9400)">Βασική Αίθουσα</span>
<span class="t" style="left:450.7px;top:722.0px;font-size:11px;line-height:11px;color:#000;transform:scaleX(0.9580)">Θέση:</span>
<span class="t" style="left:534.6px;top:768.6px;font-size:11px;line-height:11px;color:#000;transform:scaleX(0.9440)">Γραμματ.</span>
<span class="t" style="left:117.3px;top:856.0px;font-size:11px;line-height:11px;color:#000;transform:scaleX(0.9946)">Σε όλα</span>
<span class="t" style="left:242.0px;top:812.6px;font-size:11px;line-height:11px;color:#000;transform:scaleX(0.9883)">Άλλες ρυθμίσεις</span>
<span class="t" style="left:251.3px;top:838.9px;font-size:11px;line-height:11px;color:#000;transform:scaleX(1.0053)">Επεξεργ. κειμένων</span>
<span class="t" style="left:256.2px;top:871.8px;font-size:11px;line-height:11px;color:#838383;transform:scaleX(0.9810)">Προκαθορισμένα</span>
<span class="t" style="left:371.5px;top:856.5px;font-size:11px;line-height:11px;color:#000;transform:scaleX(0.9981)">Προκαθορισμένα: Όλα</span>
<span class="t" style="left:112.0px;top:702.0px;font-size:29.5px;line-height:29.5px;color:#000">ΝΕ</span>
<span class="t" style="left:178.0px;top:764.8px;font-size:10.5px;line-height:10.5px;color:#000;transform:scaleX(0.9981)">ΜΠΑ</span>
<div class="dlg" style="left:621px;top:627px;width:607px;height:354px;border-color:#6b6b6b">
  <div class="cap" style="height:25px"></div>
</div>
<svg class="abs" style="left:1207px;top:635px" width="11" height="11"><path d="M.5 .5L10 10M10 .5L.5 10" stroke="#1a1a1a" stroke-width="1.100" fill="none"/></svg>
<!-- preview box -->
<div class="abs" style="left:633px;top:664px;width:155px;height:144px;background:#fff;border:1px solid #8c8c8c;border-right-color:#b0b0b0;border-bottom-color:#b0b0b0;box-shadow:1px 1px 0 #fff"></div>
<div class="abs" style="left:634px;top:665px;width:153px;height:142px;border:1px solid #a8a8a8;border-right-color:#e8e8e8;border-bottom-color:#e8e8e8"></div>
<div class="abs" style="left:636px;top:667px;width:149px;height:4px;background:#efefef"></div>
<div class="abs" style="left:636px;top:802px;width:149px;height:4px;background:#efefef"></div>
<div class="abs" style="left:731px;top:771px;width:53px;height:28px;border:3px solid #abd98c;background:#fff"></div>
<!-- groups -->
<div class="grp" style="left:807px;top:670px;width:404px;height:141px"></div>
<div class="abs" style="left:814px;top:670px;width:48px;height:1px;background:#f0f0f0"></div>
<div class="grp" style="left:807px;top:828px;width:404px;height:113px"></div>
<div class="abs" style="left:814px;top:828px;width:126px;height:1px;background:#f0f0f0"></div>
<!-- font combo -->
<div class="abs" style="left:849px;top:697px;width:257px;height:21px;background:#fff;border:1px solid #7a7a7a"></div>
<svg class="abs" style="left:854px;top:701px" width="14" height="13" viewBox="0 0 14 13">
  <path d="M1.500 1H8.500V3.200H7.800C7.700 2.400 7.300 2 6.500 2H5.800V8.200C5.800 8.800 6.100 9 6.900 9V9.600H3.100V9C3.900 9 4.200 8.800 4.200 8.200V2H3.500C2.700 2 2.300 2.400 2.200 3.200H1.500Z" fill="#8d8d8d"/>
  <path d="M4.800 4H12.500V6.600H11.700C11.600 5.500 11.100 5 10.100 5H9.700V10.600C9.700 11.300 10 11.500 11 11.500V12.200H6.300V11.500C7.300 11.500 7.600 11.300 7.600 10.600V5H7.200C6.200 5 5.700 5.500 5.600 6.600H4.800Z" fill="#111"/>
</svg>
<svg class="abs" style="left:1092px;top:705px" width="10" height="7"><path d="M.8 1L5 5.200L9.200 1" fill="none" stroke="#444" stroke-width="1.100"/></svg>
<!-- checkboxes -->
<div class="cb" style="left:847px;top:729px"></div>
<div class="cb" style="left:847px;top:748px"></div>
<div class="cb" style="left:847px;top:766px"></div>
<!-- slider -->
<div class="abs" style="left:829px;top:853px;width:336px;height:24px;border:1px dotted #000"></div>
<div class="abs" style="left:837px;top:864px;width:319px;height:4px;background:#e7eaea;border:1px solid #d6d6d6"></div>
<div class="abs" style="left:891px;top:855px;width:10px;height:22px;background:#0078d7"></div>
<!-- edit -->
<div class="abs" style="left:867px;top:894px;width:75px;height:20px;background:#fff;border:1px solid #7a7a7a"></div>
<!-- buttons -->
<div class="btn" style="left:1057px;top:945px;width:73px;height:21px;border:2px solid #0078d7"></div>
<div class="btn" style="left:1142px;top:945px;width:73px;height:21px"></div>

<span class="t" style="left:625.4px;top:633.9px;font-size:12.5px;line-height:12.5px;color:#000;transform:scaleX(0.9617)">Γραμματ.</span>
<span class="t" style="left:816.1px;top:666.4px;font-size:11px;line-height:11px;color:#000;transform:scaleX(0.9662)">Γραμματ.</span>
<span class="t" style="left:874.5px;top:702.1px;font-size:12px;line-height:12px;color:#000;transform:scaleX(0.9744)">Arial</span>
<span class="t" style="left:1062.9px;top:701.9px;font-size:13.5px;line-height:13.5px;color:#000;transform:scaleX(0.9048)">AaE</span>
<span class="t" style="left:862.6px;top:730.9px;font-size:11px;line-height:11px;color:#000;transform:scaleX(0.8942)">Bold</span>
<span class="t" style="left:862.6px;top:749.9px;font-size:11px;line-height:11px;color:#000;transform:scaleX(1.0122)">Italic</span>
<span class="t" style="left:862.6px;top:768.0px;font-size:11px;line-height:11px;color:#000;transform:scaleX(0.9492)">Underline</span>
<span class="t" style="left:815.5px;top:824.1px;font-size:11px;line-height:11px;color:#000;transform:scaleX(0.9753)">Μέγεθος γραμματοσειράς</span>
<span class="t" style="left:873.6px;top:899.2px;font-size:11px;line-height:11px;color:#000;transform:scaleX(0.9771)">17.53</span>
<span class="t" style="left:951.6px;top:899.2px;font-size:11px;line-height:11px;color:#000;transform:scaleX(0.9610)">%</span>
<span class="t" style="left:1085.7px;top:950.8px;font-size:11px;line-height:11px;color:#000;transform:scaleX(0.8990)">OK</span>
<span class="t" style="left:1155.7px;top:950.8px;font-size:11px;line-height:11px;color:#000;transform:scaleX(0.9505)">Ακύρωση</span>
<span class="t" style="left:689.8px;top:721.3px;font-size:29.5px;line-height:29.5px;color:#000">ΝΕ</span>
<span class="t" style="left:737.1px;top:775.1px;font-size:20px;line-height:20px;color:#000;transform:scaleX(0.9493)">ΜΠΑ</span>
<svg class="abs" style="left:0;top:0" width="1426" height="1023" viewBox="0 0 1426 1023">
  <defs><filter id="sh" x="-5%" y="-5%" width="110%" height="110%"><feDropShadow dx="1" dy="1" stdDeviation="1" flood-color="#000" flood-opacity=".3"/></filter></defs>
  <g fill="none" stroke="#e6433f" stroke-width="3">
    <rect x="425.500" y="470.500" width="92" height="20"/>
    <rect x="527.500" y="552.500" width="16" height="14"/>
    <rect x="515.500" y="588.500" width="83" height="23"/>
    <rect x="888.500" y="851.500" width="15.500" height="27.500"/>
    <rect x="864.500" y="891.500" width="100" height="25"/>
  </g>
  <!-- big curved arrow from button to slider -->
  <g filter="url(#sh)">
  <path d="M571.8 627.0C571.7 631.7 571.0 644.6 571.1 655.2C571.2 665.8 571.5 678.7 572.7 690.4C573.9 702.1 575.6 713.9 578.5 725.6C581.4 737.3 585.8 750.7 589.9 760.8C594.0 770.9 596.3 776.6 603.1 786.2C609.9 795.8 621.1 809.7 630.9 818.6C640.7 827.5 651.4 833.9 661.7 839.4C672.0 844.9 682.3 848.4 692.6 851.7C702.9 855.0 713.1 857.2 723.4 859.1C733.7 861.0 743.1 862.0 754.3 863.0C765.5 864.0 784.5 864.6 790.5 864.9" fill="none" stroke="#e6433f" stroke-width="3.100" stroke-linecap="round"/>
  <path d="M798.500 865.300L789.800 861V869.600Z" fill="#e6433f"/>
  </g>
  <!-- double arrow under slider -->
  <path d="M838 881.500C920 886.500 1000 889 1156 881.500" fill="none" stroke="#e6433f" stroke-width="3"/>
  <path d="M829.500 880.800L842 875V887.300Z" fill="#e6433f"/>
  <path d="M1164.500 880.900L1153 875.300V887.400Z" fill="#e6433f"/>
</svg>


</div>
</body>
</html>
